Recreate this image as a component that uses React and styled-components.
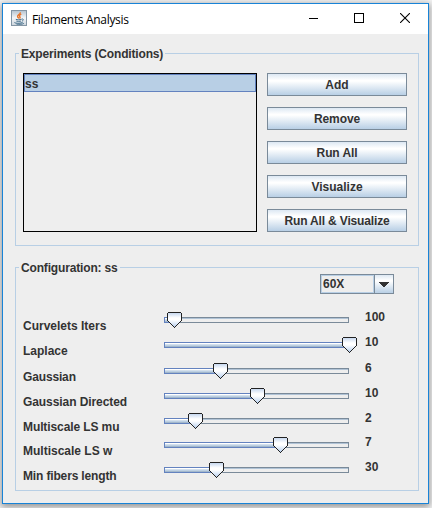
import React from "react";
import styled, { createGlobalStyle } from "styled-components";

const Global = createGlobalStyle`
  *, *::before, *::after { box-sizing: border-box; }
  html, body { margin: 0; padding: 0; background: #f4f4f4; }
  body { overflow: hidden; }
`;

const Desktop = styled.div`
  width: 432px;
  height: 508px;
  padding: 3px 3px 4px 2px;
  overflow: hidden;
`;

const Frame = styled.main`
  width: 427px;
  height: 501px;
  border: 1px solid #1883d7;
  background: #eeeeee;
  box-shadow: 0 2px 7px 1px rgba(0, 0, 0, 0.4);
  font: bold 12px/14px "Liberation Sans", Arial, sans-serif;
  color: #333333;
  display: flex;
  flex-direction: column;
`;

const TitleBar = styled.header`
  height: 30px;
  flex: none;
  background: #ffffff;
  display: flex;
  align-items: flex-start;
  padding: 6px 0 0 8px;
`;

const Title = styled.h1`
  margin: 1px 0 0 5px;
  flex: 1;
  font: normal 12px/17px "Open Sans", "Noto Sans", sans-serif;
  letter-spacing: -0.32px;
  color: #000000;
`;

const WindowButtons = styled.div`
  display: flex;
  gap: 36px;
  margin: 3px 18px 0 0;
`;

const Content = styled.div`
  padding: 19px 9px 0 12px;
  display: flex;
  flex-direction: column;
  gap: 21px;
`;

const Group = styled.section`
  width: 404px;
  height: ${(p) => p.$height}px;
  border: 1px solid #b8cfe5;
`;

const GroupTitle = styled.h2`
  width: max-content;
  height: 14px;
  margin: -7px 0 0 3px;
  padding: 0 2px;
  background: #eeeeee;
  font: inherit;
  letter-spacing: -0.16px;
`;

const Experiments = styled.div`
  display: flex;
  gap: 10px;
  padding: 12px 0 0 7px;
`;

const List = styled.div`
  width: 234px;
  height: 159px;
  border: 1px solid #000000;
`;

const ListItem = styled.div`
  height: 18px;
  border: 1px solid #6382bf;
  background: #b8cfe5;
  line-height: 18px;
  padding-left: 0;
`;

const ButtonColumn = styled.div`
  display: flex;
  flex-direction: column;
  gap: 11px;
`;

const Button = styled.button`
  width: 140px;
  height: 23px;
  padding: 1px 0 0;
  border: 1px solid #7a8a99;
  border-radius: 0;
  background: linear-gradient(#dde8f3 0%, #ffffff 30%, #ffffff 34%, #b8cfe5 100%);
  font: inherit;
  line-height: 20px;
  letter-spacing: ${(p) => p.$spacing || 0}px;
  color: #333333;
`;

const Combo = styled.div`
  width: 74px;
  height: 20px;
  margin: -1px 0 0 304px;
  border: 1px solid #7a8a99;
  display: flex;
`;

const ComboText = styled.div`
  width: 53px;
  border: 1px solid #b8cfe5;
  line-height: 16px;
  padding-left: 1px;
`;

const ComboArrow = styled.div`
  flex: 1;
  border-left: 1px solid #7a8a99;
  background: linear-gradient(#dde8f3 0%, #ffffff 30%, #ffffff 34%, #b8cfe5 100%);
  display: flex;
  padding: 7px 0 0 4px;
`;

const Settings = styled.div`
  padding: 18px 0 0 7px;
`;

const Setting = styled.div`
  display: grid;
  grid-template-columns: 141px 185px 1fr;
  height: ${(p) => p.$height}px;
`;

const Name = styled.span`
  padding-top: 7px;
  letter-spacing: ${(p) => p.$spacing}px;
`;

const Track = styled.div`
  position: relative;
  height: 6px;
  margin-top: 5px;
  border: 1px solid #7a8a99;
  background: linear-gradient(#b0c3d6 0 1px, #eeeeee 1px);
`;

const Fill = styled.div`
  position: absolute;
  left: -1px;
  top: -1px;
  height: 6px;
  border: 1px solid #6382bf;
  background: linear-gradient(#ffffff 0 1px, #d3e0ec 1px 2px, #bdd0e3 2px 3px, #a3b8cc 3px);
`;

const Thumb = styled.svg`
  position: absolute;
  top: -6px;
  display: block;
`;

const Value = styled.span`
  padding: 0 0 0 16px;
  margin-top: -2px;
`;

function JavaIcon() {
  return (
    <svg width="16" height="16" viewBox="0 0 16 16">
      <defs>
        <linearGradient id="tile" x1="0" y1="0" x2="0" y2="1">
          <stop offset="0" stopColor="#b4c2ce" />
          <stop offset=".5" stopColor="#f4f6f8" />
          <stop offset="1" stopColor="#cbd4dc" />
        </linearGradient>
      </defs>
      <rect x=".5" y=".5" width="15" height="15" fill="url(#tile)" stroke="#8496a5" />
      <path d="M9.2 2.2c.7 2-3.3 2.8-2.6 4.5.2.7 1 1 1.2 1.8M10.3 4.2c-2 .8-2.2 1.6-1.4 2.6.5.7.2 1.2-.3 1.7" fill="none" stroke="#e8762b" strokeWidth="1.4" />
      <path d="M4.8 9.3c1.5.6 4 .6 5.7 0M5.3 11.1c1.3.4 3.2.4 4.7 0M10.7 9.1c2.2-.6 2.1 1.5.2 2M3.6 12.3c-1 .9 5.6 1.6 8 .1M5.5 14.1c3 .4 6 .2 7.3-.7" fill="none" stroke="#46708c" strokeWidth="1" />
    </svg>
  );
}

function SliderThumb({ center }) {
  return (
    <Thumb width="15" height="16" viewBox="0 0 15 16" shapeRendering="crispEdges" style={{ left: center - 8 }}>
      <defs>
        <linearGradient id="thumb" x1="0" y1="0" x2="0" y2="1">
          <stop offset="0" stopColor="#c8d9f0" />
          <stop offset=".35" stopColor="#ffffff" />
          <stop offset=".5" stopColor="#ffffff" />
          <stop offset="1" stopColor="#b8d0ee" />
        </linearGradient>
      </defs>
      <path d="M1 1h13v8h-1v1h-1v1h-1v1h-1v1h-1v1h-1v1h-1v-1h-1v-1h-1v-1h-1v-1h-1v-1h-1v-1h-1z" fill="url(#thumb)" />
      <path
        d="M1 0h13v1h-13zM0 1h1v8h-1zM14 1h1v8h-1zM1 9h1v1h-1zM13 9h1v1h-1zM2 10h1v1h-1zM12 10h1v1h-1zM3 11h1v1h-1zM11 11h1v1h-1zM4 12h1v1h-1zM10 12h1v1h-1zM5 13h1v1h-1zM9 13h1v1h-1zM6 14h1v1h-1zM8 14h1v1h-1zM7 15h1v1h-1z"
        fill="#222222"
      />
    </Thumb>
  );
}

const actions = [
  { label: "Add" },
  { label: "Remove", spacing: -0.12 },
  { label: "Run All", spacing: -0.1 },
  { label: "Visualize" },
  { label: "Run All & Visualize", spacing: -0.16 },
];

const settings = [
  { name: "Curvelets Iters", value: 100, center: 10, height: 25 },
  { name: "Laplace", value: 10, center: 185, height: 26 },
  { name: "Gaussian", value: 6, center: 56, height: 25, spacing: -0.15 },
  { name: "Gaussian Directed", value: 10, center: 93, height: 25, spacing: -0.08 },
  { name: "Multiscale LS mu", value: 2, center: 31, height: 24, spacing: -0.1 },
  { name: "Multiscale LS w", value: 7, center: 116, height: 25 },
  { name: "Min fibers length", value: 30, center: 52, height: 25, spacing: -0.15 },
];

export default function App() {
  return (
    <Desktop>
      <Global />
      <Frame>
        <TitleBar>
          <JavaIcon />
          <Title>Filaments Analysis</Title>
          <WindowButtons>
            <svg width="10" height="10" shapeRendering="crispEdges">
              <path d="M1 5h9v1H1z" />
            </svg>
            <svg width="10" height="10" shapeRendering="crispEdges">
              <rect x=".5" y=".5" width="9" height="9" fill="none" stroke="#000" />
            </svg>
            <svg width="10" height="10">
              <path d="M0 0l10 10M10 0L0 10" stroke="#000" strokeWidth="1.1" />
            </svg>
          </WindowButtons>
        </TitleBar>
        <Content>
          <Group $height={193}>
            <GroupTitle>Experiments (Conditions)</GroupTitle>
            <Experiments>
              <List>
                <ListItem>ss</ListItem>
              </List>
              <ButtonColumn>
                {actions.map((a) => (
                  <Button key={a.label} $spacing={a.spacing}>{a.label}</Button>
                ))}
              </ButtonColumn>
            </Experiments>
          </Group>
          <Group $height={224}>
            <GroupTitle>Configuration: ss</GroupTitle>
            <Combo>
              <ComboText>60X</ComboText>
              <ComboArrow>
                <svg width="10" height="5" shapeRendering="crispEdges">
                  <path d="M0 0h10v1h-1v1h-1v1h-1v1h-1v1h-2v-1h-1v-1h-1v-1h-1v-1h-1z" fill="#333" />
                </svg>
              </ComboArrow>
            </Combo>
            <Settings>
              {settings.map((s) => (
                <Setting key={s.name} $height={s.height}>
                  <Name $spacing={s.spacing || 0}>{s.name}</Name>
                  <Track>
                    <Fill style={{ width: s.center }} />
                    <SliderThumb center={s.center} />
                  </Track>
                  <Value>{s.value}</Value>
                </Setting>
              ))}
            </Settings>
          </Group>
        </Content>
      </Frame>
    </Desktop>
  );
}
